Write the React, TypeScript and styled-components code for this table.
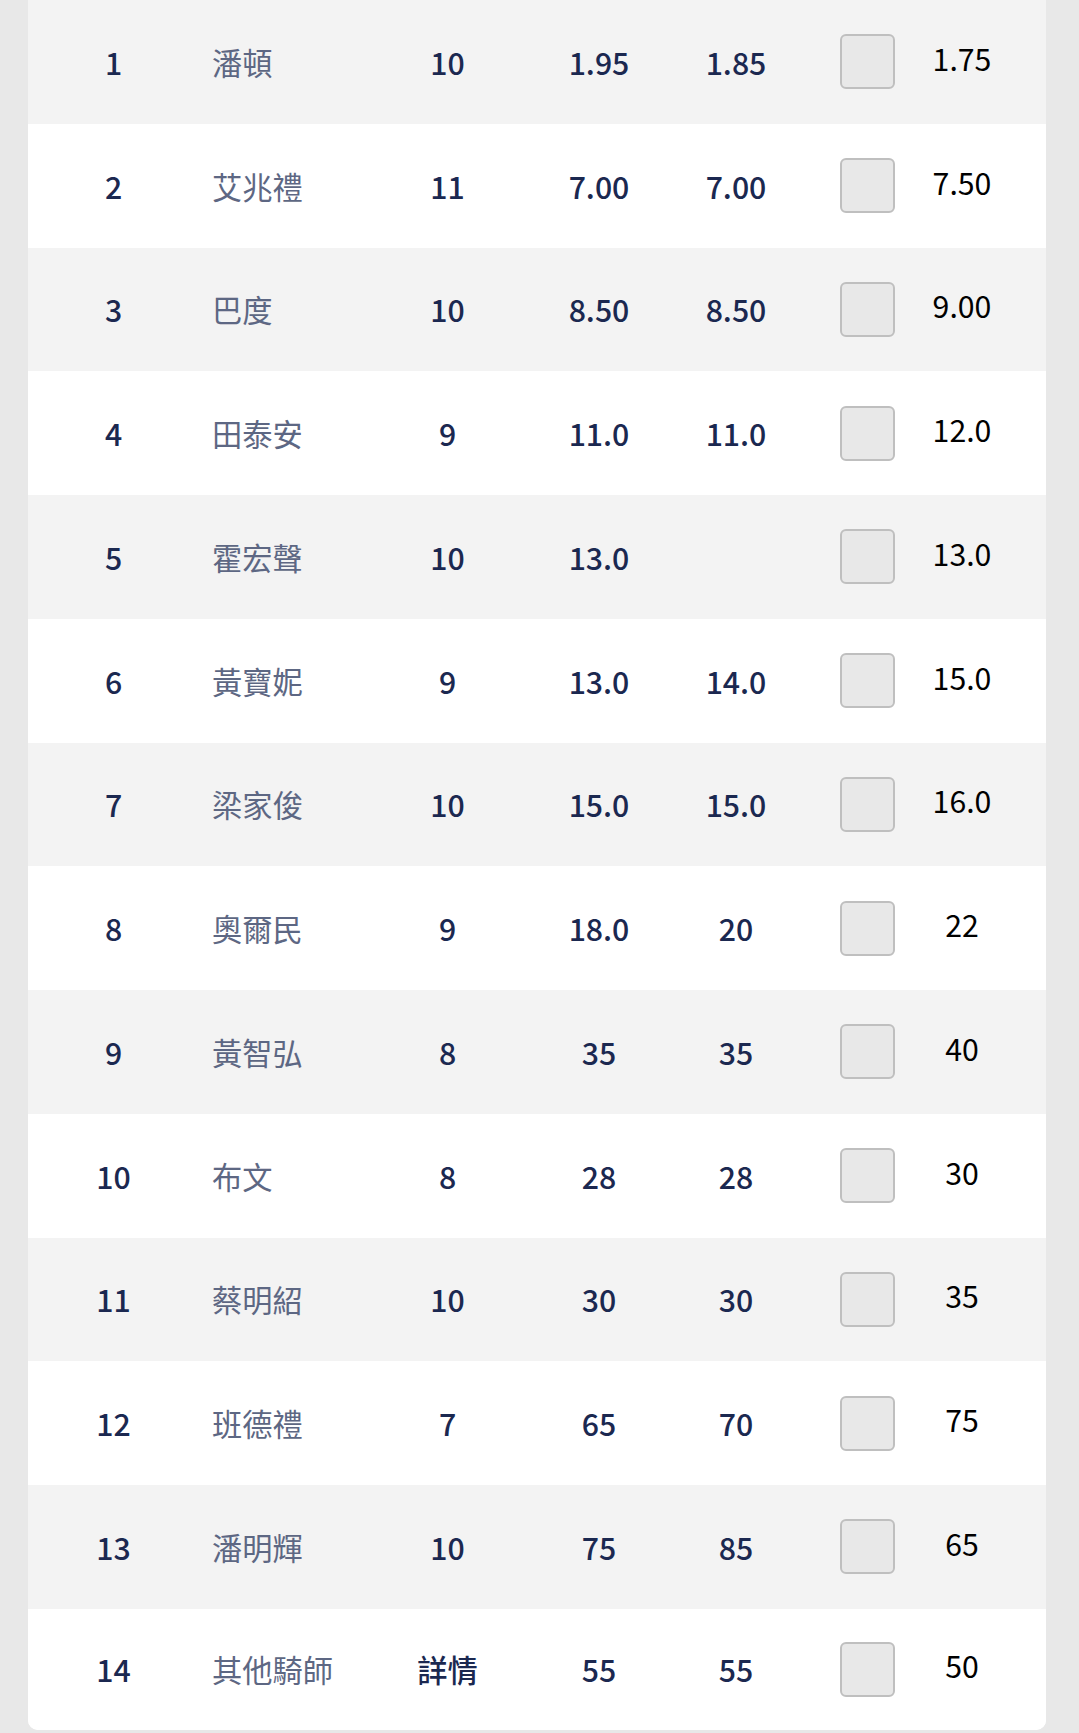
import React from "react";
import styled, { createGlobalStyle } from "styled-components";

const GlobalStyle = createGlobalStyle`
  html, body {
    margin: 0;
    padding: 0;
    background: #e8e8e8;
  }
  body {
    font-family: "Noto Sans CJK TC", "Noto Sans", sans-serif;
  }
`;

const Page = styled.div`
  min-height: 1733px;
  padding-left: 28px;
  background: #e8e8e8;
`;

const Card = styled.div`
  width: 1018px;
  background: #ffffff;
  border-radius: 0 0 10px 10px;
  overflow: hidden;
`;

const Row = styled.div<{ $shaded: boolean; $last?: boolean }>`
  display: grid;
  grid-template-columns: 171px 178px 141px 162px 112px 150px 40px 1fr;
  height: ${(p) => (p.$last ? "121.25px" : "123.75px")};
  background: ${(p) => (p.$shaded ? "#f3f3f3" : "#ffffff")};
  align-items: center;
  font-size: 30.25px;
`;

const Cell = styled.div<{ $align?: "left" | "center" }>`
  display: flex;
  justify-content: ${(p) => (p.$align === "left" ? "flex-start" : "center")};
  padding-left: ${(p) => (p.$align === "left" ? "13px" : "0")};
  white-space: nowrap;
  line-height: 1;
`;

const Num = styled(Cell)`
  color: #1b2850;
  font-weight: 500;
`;

const Name = styled(Cell)`
  color: #5d6783;
  font-weight: 400;
`;

const Quote = styled(Cell)`
  color: #000000;
  font-weight: 400;
  transform: translateY(-4px);
`;

const Box = styled.div`
  width: 55px;
  height: 55px;
  box-sizing: border-box;
  border: 2px solid #bfbfbf;
  border-radius: 6px;
  background: #e8e8e8;
`;

type Entry = {
  no: string;
  name: string;
  draw: string;
  a: string;
  b: string;
  c: string;
};

const data: Entry[] = [
  { no: "1", name: "潘頓", draw: "10", a: "1.95", b: "1.85", c: "1.75" },
  { no: "2", name: "艾兆禮", draw: "11", a: "7.00", b: "7.00", c: "7.50" },
  { no: "3", name: "巴度", draw: "10", a: "8.50", b: "8.50", c: "9.00" },
  { no: "4", name: "田泰安", draw: "9", a: "11.0", b: "11.0", c: "12.0" },
  { no: "5", name: "霍宏聲", draw: "10", a: "13.0", b: "", c: "13.0" },
  { no: "6", name: "黃寶妮", draw: "9", a: "13.0", b: "14.0", c: "15.0" },
  { no: "7", name: "梁家俊", draw: "10", a: "15.0", b: "15.0", c: "16.0" },
  { no: "8", name: "奧爾民", draw: "9", a: "18.0", b: "20", c: "22" },
  { no: "9", name: "黃智弘", draw: "8", a: "35", b: "35", c: "40" },
  { no: "10", name: "布文", draw: "8", a: "28", b: "28", c: "30" },
  { no: "11", name: "蔡明紹", draw: "10", a: "30", b: "30", c: "35" },
  { no: "12", name: "班德禮", draw: "7", a: "65", b: "70", c: "75" },
  { no: "13", name: "潘明輝", draw: "10", a: "75", b: "85", c: "65" },
  { no: "14", name: "其他騎師", draw: "詳情", a: "55", b: "55", c: "50" },
];

export default function App() {
  return (
    <>
      <GlobalStyle />
      <Page>
        <Card>
          {data.map((r, i) => (
            <Row key={r.no} $shaded={i % 2 === 0} $last={i === data.length - 1}>
              <Num>{r.no}</Num>
              <Name $align="left">{r.name}</Name>
              <Num>{r.draw}</Num>
              <Num>{r.a}</Num>
              <Num>{r.b}</Num>
              <Cell>
                <Box />
              </Cell>
              <Quote>{r.c}</Quote>
              <div />
            </Row>
          ))}
        </Card>
      </Page>
    </>
  );
}
